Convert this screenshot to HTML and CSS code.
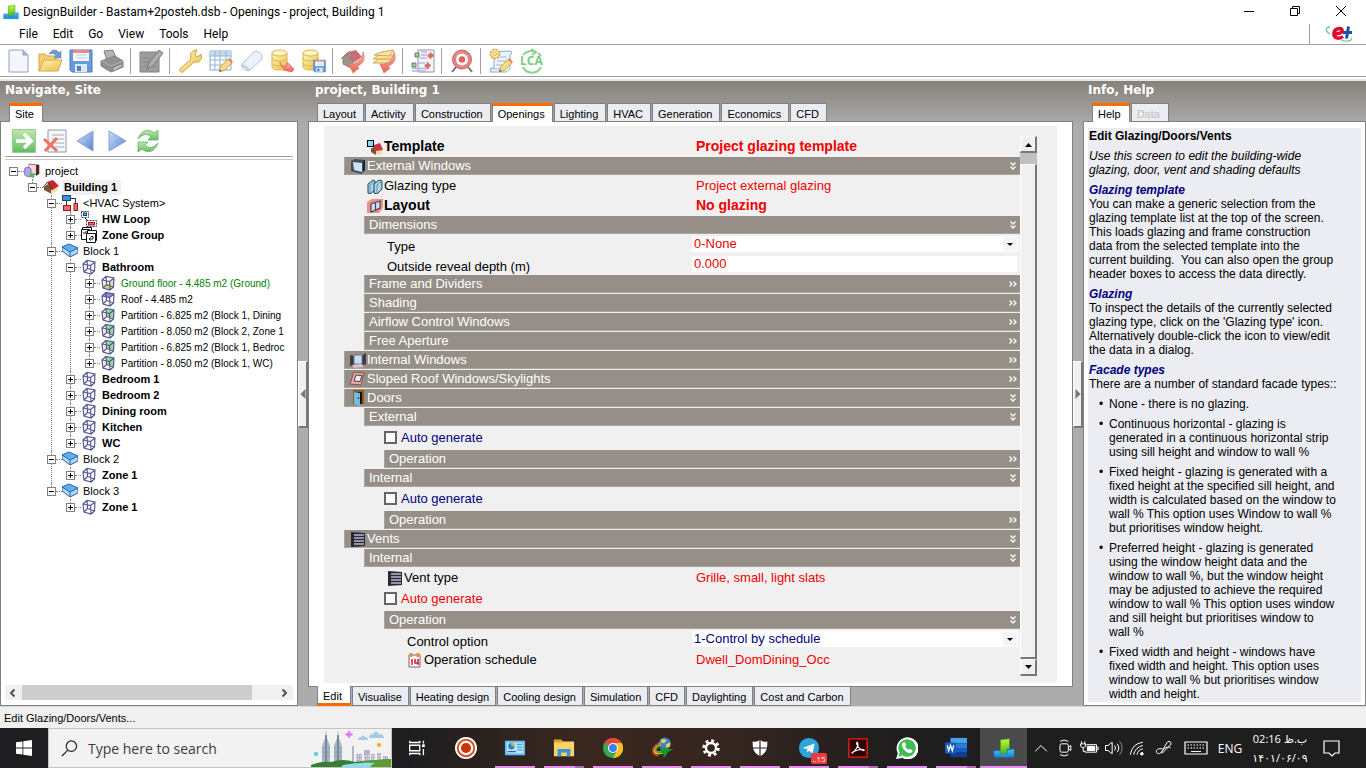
FILE: index.html
```html
<!DOCTYPE html>
<html lang="en">
<head>
<meta charset="utf-8">
<title>DesignBuilder - Bastam+2posteh.dsb - Openings - project, Building 1</title>
<link rel="stylesheet" href="styles.css">
</head>
<body>
<svg class="defs" aria-hidden="true">
  <defs>
    <linearGradient id="gy" x1="0" y1="0" x2="1" y2="1"><stop offset="0" stop-color="#fff3a8"/><stop offset="1" stop-color="#e9b93c"/></linearGradient>
    <linearGradient id="gb" x1="0" y1="0" x2="1" y2="1"><stop offset="0" stop-color="#c9dcf7"/><stop offset="1" stop-color="#4b74cf"/></linearGradient>
    <linearGradient id="gr" x1="0" y1="0" x2="0" y2="1"><stop offset="0" stop-color="#f9b0a0"/><stop offset="1" stop-color="#e9503c"/></linearGradient>
    <linearGradient id="gg" x1="0" y1="0" x2="0" y2="1"><stop offset="0" stop-color="#b9e8a8"/><stop offset="1" stop-color="#52b552"/></linearGradient>
    <linearGradient id="gl" x1="0" y1="0" x2="0" y2="1"><stop offset="0" stop-color="#b8ff3c"/><stop offset="1" stop-color="#52b51c"/></linearGradient>
    <linearGradient id="gs" x1="0" y1="0" x2="0" y2="1"><stop offset="0" stop-color="#4cc4fa"/><stop offset="1" stop-color="#1287e0"/></linearGradient>
  </defs>
  <symbol id="app" viewBox="0 0 24 24"><path d="M1 15h7v-2h3v5h4v-4l8-1v9H1z" fill="url(#gs)" stroke="#1573b8" stroke-width=".7"/><path d="M8 3l10-1v11h-3v4l-1 1H8z" fill="url(#gl)" stroke="#3d8f16" stroke-width=".7"/></symbol>
  <symbol id="cube" viewBox="0 0 16 16"><path d="M2 5l4-3.500 8 1.500-.5 9L10 15l-7-2zM2 5l7.500 1.500L14 3M9.500 6.500L10 15M6 1.500L6.500 9.500 3 13M6.500 9.500L13.500 12" fill="none" stroke="#585890" stroke-width="1.200"/></symbol>
  <symbol id="cube-floor" viewBox="0 0 16 16"><path d="M6.500 9L13.500 11 10 15 3 12.500z" fill="#e0cf70"/><path d="M9.500 6.500L14 3l-.5 8-3.500 4z" fill="#dfe0b8"/><use href="#cube"/></symbol>
  <symbol id="cube-roof" viewBox="0 0 16 16"><path d="M2 5l4-3.500L14 3 9.500 6.500z" fill="#8f8fe0"/><use href="#cube"/></symbol>
  <symbol id="cube-wall" viewBox="0 0 16 16"><path d="M6 2l8 1-.5 8-7-1.500z" fill="#8fdc94"/><use href="#cube"/></symbol>
  <symbol id="block" viewBox="0 0 16 16"><path d="M0 4l7-3 9 4v5l-8 4-8-6z" fill="#a9d9ff"/><path d="M0 4l7-3 9 4-8 4z" fill="#5aaefa"/><path d="M0 4l7-3 9 4v5l-8 4-8-6zM0 4l8 5 8-4M8 9v5" fill="none" stroke="#35628f"/></symbol>
  <symbol id="house" viewBox="0 0 16 16"><path d="M1 8l4-3 4 5v5l-8-4z" fill="#7b5238"/><path d="M8 10l6-3v5l-6 3z" fill="#f3dc9c"/><path d="M4 3l6-2 6 6-7 4z" fill="#c9252d"/><path d="M0 8.500L4.500 3l5 8" fill="none" stroke="#54322c"/></symbol>
  <symbol id="project" viewBox="0 0 16 16"><path d="M5 1l10 1v9l-10 1z" fill="#edb8bc" stroke="#5e3038" stroke-width=".6"/><path d="M5 2l7 .5-.5 8H5z" fill="#ffd5d8"/><path d="M12 2l3 0v9l-3 2z" fill="#4b2932"/><path d="M1 5l4-1 2 2v8l-5-1-2-2z" fill="#a9a9ea" stroke="#555384" stroke-width=".7"/><path d="M5 11l6-1-1 5-4-1z" fill="#4ebc65"/></symbol>
  <symbol id="hvac" viewBox="0 0 16 16"><path d="M8 3.500h5.500v6M4.500 6v5" fill="none" stroke="#233" stroke-width="1"/><rect x=".5" y=".5" width="8" height="5" fill="#3993d3" stroke="#174b7a"/><rect x="1.500" y="10.500" width="7" height="5" fill="#f46769" stroke="#a21422"/><rect x="12" y="8.500" width="3.500" height="7" fill="#f46769" stroke="#a21422"/></symbol>
  <symbol id="loop" viewBox="0 0 16 16"><path d="M.5.500h7v6h-7zM5.500 9.500h10v6h-10z" fill="none" stroke="#346" stroke-dasharray="2 1"/><rect x="2.500" y="2" width="3" height="2.500" fill="#7ac" stroke="#148"/><rect x="7.500" y="11.500" width="6" height="2.500" fill="#f66" stroke="#b11"/><path d="M4 7l3 3" stroke="#222"/></symbol>
  <symbol id="zgroup" viewBox="0 0 16 16"><g fill="#fff" stroke="#111"><path d="M1.500.500h9v10h-9z"/><path d="M.5 2.500h8v10h-8z"/><path d="M6.500 3.500h9v10h-9z"/><path d="M5.500 6.500h9v9h-9z"/></g><path d="M8 12h4V9.500h-2M9.500 10.500L8 12l1.500 1.500M2 6h3V4" fill="none" stroke="#111"/></symbol>
  <symbol id="win" viewBox="0 0 16 16"><path d="M1 3l4-2 10 1v10l-4 4-10-3z" fill="#444d5a"/><path d="M3 4l9 1v9l-8-2z" fill="#c9e4f7"/><path d="M13 3l2-1v10l-2 2z" fill="#20252d"/></symbol>
  <symbol id="winint" viewBox="0 0 16 16"><path d="M0 3l4 1v9l-4 1zM11 4l5-3v11l-4 2z" fill="#3d3c44"/><path d="M4 3h8v9H4z" fill="#c7defb" stroke="#777" /><path d="M2 13l10-1 2 3-10 1z" fill="#d6c4c8"/></symbol>
  <symbol id="sky" viewBox="0 0 16 16"><path d="M4 1l10 1-3 12-11-1z" fill="#f2a6a3" stroke="#8e4c4c"/><path d="M6 4l6 .5-2 6-6-.5z" fill="#d9f2fb" stroke="#444"/></symbol>
  <symbol id="door" viewBox="0 0 16 16"><path d="M3 0h11v14H3z" fill="#955a22"/><path d="M5 2h7v12H5z" fill="#111"/><path d="M4 2l6 1v13l-6-2z" fill="#66c3e8"/><circle cx="8.500" cy="8" r=".9" fill="#c11"/></symbol>
  <symbol id="vent" viewBox="0 0 16 16"><path d="M1 1l14 1v13l-14 1z" fill="#292933"/><path d="M4 4h10M4 7h10M4 10h10M4 13h10" stroke="#b8b8d0" stroke-width="1.300"/></symbol>
  <symbol id="template" viewBox="0 0 16 16"><path d="M4 9h5v7l-5-3z" fill="#79533b"/><path d="M9 11l6-1v5l-6 1z" fill="#f0df98"/><path d="M7 6l6-2 3 7-7 1-3-3z" fill="#cd3442"/><rect x=".5" y="1.500" width="6" height="6" fill="#86e1f8" stroke="#000"/></symbol>
  <symbol id="glaze" viewBox="0 0 16 16"><path d="M1 6l5-4 2 1v9l-5 4-2-1z" fill="#a6d9ef" stroke="#243d4e"/><path d="M7 6l5-4 3 1v8l-5 5-3-1z" fill="#a6d9ef" stroke="#243d4e"/><path d="M3 7l5-4M3 7v8M10 7l5-4M10 7v8" stroke="#4f8098" stroke-width=".8"/></symbol>
  <symbol id="layouticon" viewBox="0 0 16 16"><path d="M0 4l5-3 11 0v9l-4 5H0z" fill="#eb917d"/><path d="M4 6l9-3v7l-9 4zM8.500 4.500v7.500" fill="#cde2fa" stroke="#4a4460" stroke-width="1.200"/></symbol>
  <symbol id="cal" viewBox="0 0 16 16"><path d="M2 3h11v12H2z" fill="#fff" stroke="#835967"/><path d="M4 1v4M11 1v4" stroke="#d49b45" stroke-width="3"/><path d="M5 7v6M8 7v4h4M11 7v6" fill="none" stroke="#d31838" stroke-width="1.500"/></symbol>
  <symbol id="down" viewBox="0 0 10 10"><path d="M2.500 1.500L5 4l2.500-2.500M2.500 5.500L5 8l2.500-2.500" fill="none" stroke="#fff" stroke-width="1.300"/></symbol>
  <symbol id="side" viewBox="0 0 10 10"><path d="M1.500 2.500L4 5 1.500 7.500M5.500 2.500L8 5 5.500 7.500" fill="none" stroke="#fff" stroke-width="1.300"/></symbol>
  <symbol id="db" viewBox="0 0 24 24"><path d="M1 4v14c0 4 15 4 15 0V4" fill="url(#gy)" stroke="#d8ae45"/><ellipse cx="8.500" cy="4" rx="7.500" ry="3" fill="#fff6ba" stroke="#d8ae45"/><path d="M1 9c0 4 15 4 15 0M1 14c0 4 15 4 15 0" fill="none" stroke="#d8ae45"/></symbol>
  <symbol id="disk" viewBox="0 0 24 24"><path d="M1 1h22v22H3l-2-2z" fill="#5792d7" stroke="#3d6fae"/><path d="M4 1h16v11H4z" fill="#f4faff"/><path d="M4 1h16v3H4z" fill="#ee7f70"/><path d="M7 6h11M7 9h11" stroke="#a9c7e5"/><path d="M6 15h12v8H6z" fill="#d7e5f5"/><path d="M8 17h4v5H8z" fill="#4176b3"/></symbol>
  <symbol id="swoop" viewBox="0 0 24 24"><path d="M22 3c3 7 0 12-6 14l2 2-6 5-4-9 4 0c6-1 9-5 10-12z" fill="url(#gr)" stroke="#df6251" stroke-width=".7"/></symbol>
  <symbol id="pencil" viewBox="0 0 12 12"><path d="M1 11l1-4 6-6 3 3-6 6z" fill="#f8d875" stroke="#b98b3f" stroke-width=".7"/><path d="M8 1l1-1 3 3-1 1z" fill="#e46a64"/><path d="M1 11l.5-2 1.500 1.500z" fill="#555"/></symbol>
</svg>

<div class="app">
  <header class="titlebar">
    <svg class="i20"><use href="#app"/></svg>
    <h1>DesignBuilder - Bastam+2posteh.dsb - Openings - project, Building 1</h1>
    <div class="winbtns">
      <button aria-label="Minimize"><svg viewBox="0 0 12 12"><path d="M1 6.500h10" stroke="#000"/></svg></button>
      <button aria-label="Restore"><svg viewBox="0 0 12 12"><path d="M1.500 3.500h7v7h-7zM3.500 3.500v-2h7v7h-2" fill="none" stroke="#000"/></svg></button>
      <button aria-label="Close"><svg viewBox="0 0 12 12"><path d="M1 1l10 10M11 1L1 11" stroke="#000"/></svg></button>
    </div>
  </header>
  <div class="menurow">
    <nav class="menu"><button>File</button><button>Edit</button><button>Go</button><button>View</button><button>Tools</button><button>Help</button></nav>
    <div class="brand"><svg viewBox="0 0 28 18" width="28" height="18"><path d="M5 10C0 7 0 3 5 3M16 16c6 2 12 1 10-2" fill="none" stroke="#6bc98c" stroke-width="1.300"/><path d="M18 8.500h9M23.500 2.500l-2 12" fill="none" stroke="#1853a8" stroke-width="3"/><path d="M8 9.500c6 1 10-1 9-4-1-2-7-1-8 3-1 6 5 7 9 4" fill="none" stroke="#e2082c" stroke-width="3.400"/></svg></div>
  </div>
  <div class="toolbar">
    <button aria-label="New"><svg viewBox="0 0 24 24"><path d="M2 1h14l5 5v17H2z" fill="#f4f5fd" stroke="#8d94b5"/><path d="M16 1v5h5" fill="#a7b0da" stroke="#8d94b5"/></svg></button>
    <button aria-label="Open"><svg viewBox="0 0 24 24"><path d="M1 5h6l2 2h9v6H6L1 22z" fill="#f2cb58" stroke="#cf9e34"/><path d="M1 22L6 11h18l-4 11z" fill="url(#gy)" stroke="#d3a137"/><path d="M11 5c3-5 8-5 10-1l2-2v7h-7l2-2c-1-3-4-3-7-2z" fill="#5f8fca" stroke="#4775ae" stroke-width=".6"/></svg></button>
    <button aria-label="Save"><svg><use href="#disk"/></svg></button>
    <button aria-label="Print"><svg viewBox="0 0 24 24"><path d="M4 2l9-1 3 8-9 3z" fill="#aaa" stroke="#777"/><path d="M1 12l14-5 8 5v6l-12 5-10-6z" fill="#858585" stroke="#747474"/><path d="M2 12l9 5 12-5" fill="none" stroke="#aaa"/><path d="M12 19l9-4 2 2-9 5z" fill="#bbb" stroke="#777"/></svg></button>
    <span class="sep"></span>
    <button aria-label="Edit"><svg viewBox="0 0 24 24"><path d="M1 3h19v20H1z" fill="#939393" stroke="#777"/><path d="M4 9h8M4 13h7M4 17h12" stroke="#777"/><path d="M8 20l2-6L20 1l4 3-10 13z" fill="#a5a5a5" stroke="#666"/></svg></button>
    <span class="sep"></span>
    <button aria-label="Settings"><svg viewBox="0 0 24 24"><path d="M2 20L13 10c-2-5 1-9 6-9l-2 5 2 2 4-3c2 6-2 9-7 8L5 23c-2 1-4-1-3-3z" fill="url(#gy)" stroke="#d39a2d"/></svg></button>
    <button aria-label="Data table"><svg viewBox="0 0 24 24"><path d="M1 2h21v19H1z" fill="#fafdff" stroke="#7c9fc5"/><path d="M1 2h21v5H1z" fill="#bfd5ee"/><path d="M1 7h21M1 11h21M1 16h21M6 2v19M11 2v19M17 2v19" stroke="#8aaed1"/><use href="#pencil" x="9" y="9" width="15" height="15"/></svg></button>
    <button aria-label="Clear"><svg viewBox="0 0 24 24"><path d="M2 15L14 3q4-2 8 3 1 3-1 5L10 21q-4 2-8-3-1-2 0-3z" fill="#eaf1fc" stroke="#a9bbda"/><path d="M1 17q4 1 8 5l1-1Q6 16 2 15z" fill="#b6c8e9"/></svg></button>
    <button aria-label="Load from library"><svg viewBox="0 0 24 24"><use href="#db"/><path d="M9 13c2 5 5 4 7 4v-4l7 7-2 3-9-2 2-1c-3-1-5-3-5-7z" fill="url(#gr)" stroke="#d35a4c" stroke-width=".7"/></svg></button>
    <button aria-label="Save to library"><svg viewBox="0 0 24 24"><use href="#db"/><use href="#disk" x="11" y="10" width="13" height="14"/></svg></button>
    <span class="sep"></span>
    <button aria-label="Load building"><svg viewBox="0 0 24 24"><path d="M2 9l4-4 6 7v8L2 15z" fill="#988779" stroke="#776"/><path d="M12 11l7-3v8l-7 4z" fill="#ddc6ac"/><path d="M6 3l9-2 6 7-8 5z" fill="#c45f68"/><path d="M0 10l6-6 7 9" fill="none" stroke="#866"/><use href="#swoop"/></svg></button>
    <button aria-label="Load layers"><svg viewBox="0 0 24 24"><g fill="#f9e391" stroke="#cf9d48"><path d="M1 14l6-4h14l-5 4z"/><path d="M1 10l6-4h15l-5 4z"/><path d="M2 6l7-3 13-2-5 6z"/></g><use href="#swoop"/></svg></button>
    <span class="sep"></span>
    <button aria-label="Mapping"><svg viewBox="0 0 24 24"><path d="M7 1h16v22H7z" fill="#f3f3fa" stroke="#858aa5"/><path d="M10 3h6M10 6h6M9 9h7M7 14h7M1 19.500h17M1 22h14" stroke="#b3aed6" stroke-width="1.500"/><path d="M4 4h4v4H4zM1 14h4v4H1z" fill="#8fcb8d" stroke="#56725b"/><path d="M17 5.500h2V3l4 3.500-4 3.500V8h-2zM14 15.500h2V13l4 3.500-4 3.500V18h-2z" fill="#e15b55" stroke="#b94848" stroke-width=".5"/></svg></button>
    <span class="sep"></span>
    <button aria-label="Target"><svg viewBox="0 0 24 24"><path d="M6 18l-4 5M18 18l4 5" stroke="#666" stroke-width="2"/><circle cx="12" cy="10.500" r="9.500" fill="#e57672" stroke="#c75553"/><circle cx="12" cy="10.500" r="6" fill="#fff"/><circle cx="12" cy="10.500" r="3.200" fill="#df514e"/></svg></button>
    <span class="sep"></span>
    <button aria-label="Script"><svg viewBox="0 0 24 24"><path d="M5 3l17-1q2 2-1 4v14l-4 3H1l1-4h3z" fill="#edf4fd" stroke="#7fa7cf"/><path d="M9 8h9M8 12h9M7 16h8M2 20h14" stroke="#8db1dc"/><circle cx="6" cy="5" r="4.500" fill="#fae890" stroke="#d4a546" stroke-width="2" stroke-dasharray="2 1"/><circle cx="6" cy="5" r="1.500" fill="#fff" stroke="#d4a546"/><use href="#pencil" x="9" y="9" width="15" height="15"/></svg></button>
    <button class="lca" aria-label="LCA"><svg viewBox="0 0 24 24"><path d="M3 6A10 10 0 0 1 15 3M18 4l3 3M3 18a10 10 0 0 0 18 0M11 0l5 3-4 3" fill="none" stroke="#7fd082" stroke-width="2"/><text x="0" y="16">LCA</text></svg></button>
  </div>

  <main class="work">
    <section class="pane left">
      <h2>Navigate, Site</h2>
      <div class="tabs" role="tablist"><button class="tab on" role="tab">Site</button></div>
      <div class="sheet navsheet">
        <div class="navtools">
          <button aria-label="Go"><svg viewBox="0 0 24 24"><path d="M.5.500h23v23H.5z" fill="url(#gg)" stroke="#8dca86"/><path d="M4 12h14M12 5l7 7-7 7" fill="none" stroke="#fff" stroke-width="3.600"/></svg></button>
          <button aria-label="Delete"><svg viewBox="0 0 24 24"><path d="M5 1h18v22H5z" fill="#f7f7fa" stroke="#888c9a"/><path d="M9 6h12M9 10h12M12 14h9M12 18h9" stroke="#9fa2b2"/><path d="M1 10l13 12M14 9L2 22" stroke="#ee6156" stroke-width="3"/></svg></button>
          <button aria-label="Back"><svg viewBox="0 0 24 24"><path d="M3 12L19 2v20z" fill="url(#gb)" stroke="#7798d8"/></svg></button>
          <button aria-label="Forward"><svg viewBox="0 0 24 24"><path d="M21 12L4 2v20z" fill="url(#gb)" stroke="#7798d8"/></svg></button>
          <button aria-label="Refresh"><svg viewBox="0 0 24 24"><path d="M2 10C5 1 13-1 18 4l4-3v10H12l3-3C11 4 7 5 2 10z" fill="url(#gg)" stroke="#55ac55" stroke-width=".8"/><path d="M22 14c-3 9-11 11-16 6l-4 3V13h10l-3 3c4 4 8 3 13-2z" fill="url(#gg)" stroke="#55ac55" stroke-width=".8"/></svg></button>
        </div>
        <div class="treebox">
        <ul class="tree">
          <li><div class="node"><i class="x m"></i><svg><use href="#project"/></svg><span>project</span></div>
          <ul><li><div class="node b"><i class="x m"></i><svg><use href="#house"/></svg><span class="sel">Building 1</span></div>
            <ul>
              <li><div class="node"><i class="x m"></i><svg><use href="#hvac"/></svg><span>&lt;HVAC System&gt;</span></div>
                <ul>
                  <li><div class="node b"><i class="x"></i><svg><use href="#loop"/></svg><span>HW Loop</span></div></li>
                  <li><div class="node b"><i class="x"></i><svg><use href="#zgroup"/></svg><span>Zone Group</span></div></li>
                </ul></li>
              <li><div class="node"><i class="x m"></i><svg><use href="#block"/></svg><span>Block 1</span></div>
                <ul>
                  <li><div class="node b"><i class="x m"></i><svg><use href="#cube"/></svg><span>Bathroom</span></div>
                    <ul class="surfaces">
                      <li><div class="node g"><i class="x"></i><svg><use href="#cube-floor"/></svg><span>Ground floor - 4.485 m2 (Ground)</span></div></li>
                      <li><div class="node"><i class="x"></i><svg><use href="#cube-roof"/></svg><span>Roof - 4.485 m2</span></div></li>
                      <li><div class="node"><i class="x"></i><svg><use href="#cube-wall"/></svg><span>Partition - 6.825 m2 (Block 1, Dining</span></div></li>
                      <li><div class="node"><i class="x"></i><svg><use href="#cube-wall"/></svg><span>Partition - 8.050 m2 (Block 2, Zone 1</span></div></li>
                      <li><div class="node"><i class="x"></i><svg><use href="#cube-wall"/></svg><span>Partition - 6.825 m2 (Block 1, Bedroc</span></div></li>
                      <li><div class="node"><i class="x"></i><svg><use href="#cube-wall"/></svg><span>Partition - 8.050 m2 (Block 1, WC)</span></div></li>
                    </ul></li>
                  <li><div class="node b"><i class="x"></i><svg><use href="#cube"/></svg><span>Bedroom 1</span></div></li>
                  <li><div class="node b"><i class="x"></i><svg><use href="#cube"/></svg><span>Bedroom 2</span></div></li>
                  <li><div class="node b"><i class="x"></i><svg><use href="#cube"/></svg><span>Dining room</span></div></li>
                  <li><div class="node b"><i class="x"></i><svg><use href="#cube"/></svg><span>Kitchen</span></div></li>
                  <li><div class="node b"><i class="x"></i><svg><use href="#cube"/></svg><span>WC</span></div></li>
                </ul></li>
              <li><div class="node"><i class="x m"></i><svg><use href="#block"/></svg><span>Block 2</span></div>
                <ul><li><div class="node b"><i class="x"></i><svg><use href="#cube"/></svg><span>Zone 1</span></div></li></ul></li>
              <li><div class="node"><i class="x m"></i><svg><use href="#block"/></svg><span>Block 3</span></div>
                <ul><li><div class="node b"><i class="x"></i><svg><use href="#cube"/></svg><span>Zone 1</span></div></li></ul></li>
            </ul></li></ul></li>
        </ul>
        </div>
        <div class="hscroll"><button aria-label="Scroll left"><svg viewBox="0 0 16 14"><path d="M9.500 3.500L6 7l3.500 3.500" fill="none" stroke="#505050" stroke-width="2"/></svg></button><span class="hthumb"></span><button aria-label="Scroll right"><svg viewBox="0 0 16 14"><path d="M6.500 3.500L10 7l-3.500 3.500" fill="none" stroke="#505050" stroke-width="2"/></svg></button></div>
      </div>
    </section>

    <div class="split"><button aria-label="Collapse navigator"><svg viewBox="0 0 6 10"><path d="M5.500 0v10L.5 5z" fill="#777"/></svg></button></div>

    <section class="pane center">
      <h2>project, Building 1</h2>
      <div class="tabs" role="tablist"><button class="tab" role="tab">Layout</button><button class="tab" role="tab">Activity</button><button class="tab" role="tab">Construction</button><button class="tab on" role="tab">Openings</button><button class="tab" role="tab">Lighting</button><button class="tab" role="tab">HVAC</button><button class="tab" role="tab">Generation</button><button class="tab" role="tab">Economics</button><button class="tab" role="tab">CFD</button></div>
      <div class="sheet propsheet">
        <div class="props">
          <div class="list">
            <div class="row b in1"><span class="lab"><svg><use href="#template"/></svg>Template</span><span class="val">Project glazing template</span></div>
            <button class="bar"><svg class="ic"><use href="#win"/></svg><span>External Windows</span><svg class="ch"><use href="#down"/></svg></button>
            <div class="row in1"><span class="lab"><svg><use href="#glaze"/></svg>Glazing type</span><span class="val">Project external glazing</span></div>
            <div class="row b in1"><span class="lab"><svg><use href="#layouticon"/></svg>Layout</span><span class="val">No glazing</span></div>
            <button class="bar l1"><span>Dimensions</span><svg class="ch"><use href="#down"/></svg></button>
            <div class="row in2"><label class="lab low" for="type">Type</label><span class="field"><select id="type" class="red"><option>0-None</option></select><svg class="arr" viewBox="0 0 14 14"><path d="M4 6h6L7 9z"/></svg></span></div>
            <div class="row in2"><label class="lab low" for="depth">Outside reveal depth (m)</label><span class="field"><input id="depth" class="red" type="text" value="0.000"></span></div>
            <button class="bar l1"><span>Frame and Dividers</span><svg class="ch"><use href="#side"/></svg></button>
            <button class="bar l1"><span>Shading</span><svg class="ch"><use href="#side"/></svg></button>
            <button class="bar l1"><span>Airflow Control Windows</span><svg class="ch"><use href="#side"/></svg></button>
            <button class="bar l1"><span>Free Aperture</span><svg class="ch"><use href="#side"/></svg></button>
            <button class="bar"><svg class="ic"><use href="#winint"/></svg><span>Internal Windows</span><svg class="ch"><use href="#side"/></svg></button>
            <button class="bar"><svg class="ic"><use href="#sky"/></svg><span>Sloped Roof Windows/Skylights</span><svg class="ch"><use href="#side"/></svg></button>
            <button class="bar"><svg class="ic"><use href="#door"/></svg><span>Doors</span><svg class="ch"><use href="#down"/></svg></button>
            <button class="bar l1"><span>External</span><svg class="ch"><use href="#down"/></svg></button>
            <label class="check navy"><input type="checkbox">Auto generate</label>
            <button class="bar l2"><span>Operation</span><svg class="ch"><use href="#side"/></svg></button>
            <button class="bar l1"><span>Internal</span><svg class="ch"><use href="#down"/></svg></button>
            <label class="check navy"><input type="checkbox">Auto generate</label>
            <button class="bar l2"><span>Operation</span><svg class="ch"><use href="#side"/></svg></button>
            <button class="bar"><svg class="ic"><use href="#vent"/></svg><span>Vents</span><svg class="ch"><use href="#down"/></svg></button>
            <button class="bar l1"><span>Internal</span><svg class="ch"><use href="#down"/></svg></button>
            <div class="row in2"><span class="lab"><svg><use href="#vent"/></svg>Vent type</span><span class="val">Grille, small, light slats</span></div>
            <label class="check red"><input type="checkbox">Auto generate</label>
            <button class="bar l2"><span>Operation</span><svg class="ch"><use href="#down"/></svg></button>
            <div class="row in3"><label class="lab low" for="ctrl">Control option</label><span class="field"><select id="ctrl" class="navy"><option>1-Control by schedule</option></select><svg class="arr" viewBox="0 0 14 14"><path d="M4 6h6L7 9z"/></svg></span></div>
            <div class="row in3"><span class="lab"><svg><use href="#cal"/></svg>Operation schedule</span><span class="val">Dwell_DomDining_Occ</span></div>
          </div>
          <div class="vscroll"><button aria-label="Scroll up"><svg viewBox="0 0 9 5"><path d="M1 5l3.500-4L8 5z"/></svg></button><span class="vthumb"></span><button aria-label="Scroll down"><svg viewBox="0 0 9 5"><path d="M1 0l3.500 4L8 0z"/></svg></button></div>
        </div>
      </div>
      <div class="tabs bottom" role="tablist"><button class="tab on" role="tab">Edit</button><button class="tab" role="tab">Visualise</button><button class="tab" role="tab">Heating design</button><button class="tab" role="tab">Cooling design</button><button class="tab" role="tab">Simulation</button><button class="tab" role="tab">CFD</button><button class="tab" role="tab">Daylighting</button><button class="tab" role="tab">Cost and Carbon</button></div>
    </section>

    <div class="split"><button aria-label="Collapse help"><svg viewBox="0 0 6 10"><path d="M.5 0v10l5-5z" fill="#777"/></svg></button></div>

    <section class="pane right">
      <h2>Info, Help</h2>
      <div class="tabs" role="tablist"><button class="tab on" role="tab">Help</button><button class="tab off" role="tab">Data</button></div>
      <div class="sheet helpsheet">
        <article class="help">
          <h3>Edit Glazing/Doors/Vents</h3>
          <p><em>Use this screen to edit the building-wide glazing, door, vent and shading defaults</em></p>
          <h4>Glazing template</h4>
          <p>You can make a generic selection from the glazing template list at the top of the screen. This loads glazing and frame construction<br>data from the selected template into the current building.&nbsp; You can also open the group header boxes to access the data directly.</p>
          <h4>Glazing</h4>
          <p>To inspect the details of the currently selected glazing type, click on the 'Glazing type' icon. Alternatively double-click the icon to view/edit the data in a dialog.</p>
          <h4>Facade types</h4>
          <p>There are a number of standard facade types::</p>
          <ul>
            <li>None - there is no glazing.</li>
            <li>Continuous horizontal - glazing is generated in a continuous horizontal strip using sill height and window to wall %</li>
            <li>Fixed height - glazing is generated with a fixed height at the specified sill height, and width is calculated based on the window to wall % This option uses Window to wall % but prioritises window height.</li>
            <li>Preferred height - glazing is generated using the window height data and the window to wall %, but the window height may be adjusted to achieve the required window to wall % This option uses window and sill height but prioritises window to wall&nbsp;%</li>
            <li>Fixed width and height - windows have fixed width and height. This option uses window to wall % but prioritises window width and height.</li>
          </ul>
        </article>
      </div>
    </section>
  </main>
  <footer class="status">Edit Glazing/Doors/Vents...</footer>

  <div class="taskbar">
    <button class="start" aria-label="Start"><svg viewBox="0 0 16 16"><path d="M0 2.300l6.500-.9v6.100H0zM7.300 1.300L16 0v7.500H7.300zM0 8.400h6.500v6.200L0 13.700zM7.300 8.400H16V16l-8.700-1.200z" fill="#fff"/></svg></button>
    <label class="search">
      <svg class="mag" viewBox="0 0 18 18"><circle cx="11" cy="6.500" r="5.500" fill="none" stroke="#222" stroke-width="1.300"/><path d="M7 11l-6 6" stroke="#222" stroke-width="1.300"/></svg>
      <input type="text" placeholder="Type here to search" aria-label="Type here to search">
      <svg class="city" viewBox="0 0 80 38"><path d="M11 36V17l3-8 1-8 1 8 3 8v19zM23 36V17l3-8 1-8 1 8 3 8v19z" fill="#a9b6c6"/><path d="M15 6v30M27 6v30" stroke="#66798e" stroke-width="1.500"/><path d="M11 19h8M11 23h8M11 27h8M23 19h8M23 23h8M23 27h8" stroke="#7e90a6" stroke-width=".8"/><path d="M38 1l1.500 3 3 1.500-3 1.500L38 9.500 36.500 7l-3-1.500 3-1.500z" fill="#dc7bf0"/><circle cx="5" cy="25" r="2.200" fill="#5fd0e8"/><circle cx="68" cy="16" r="2" fill="#f5a81c"/><path d="M47 11q0-3 3-3 2-3 4 0 3 0 3 3zM58 9q0-4 4-4 3-5 6 0 5 0 5 4z" fill="#a8c9df"/><path d="M41 33V17h2v16zM45 33v-8h6v8zM53 33V21h6v12zM60 33v-8h4v8zM66 33v-9h4v9zM72 33v-6h5v6z" fill="#b9b2c4"/><path d="M45 27h34M45 30h34" stroke="#fff" stroke-dasharray="1 1"/><path d="M0 36q10-4 20-3 12-4 24 0 18-2 36-3v8H0z" fill="#397d32"/><path d="M50 32l30-2v8H60z" fill="#5c9a34"/><path d="M32 36q16-3 32-2-6 3-4 4H30z" fill="#87e0f0"/></svg>
    </label>
    <div class="apps">
      <button class="plain" aria-label="Task view"><svg viewBox="0 0 24 24"><path d="M4 4v2h11V4M4 20v-2h11v2M4 9h11v6H4zM19 4v3M19 13v7" fill="none" stroke="#fff" stroke-width="1.400"/><path d="M17.500 8h3v3h-3z" fill="#fff"/></svg></button>
      <button class="plain" aria-label="Recorder"><svg viewBox="0 0 24 24"><circle cx="12" cy="12" r="12" fill="#fff"/><circle cx="12" cy="12" r="9" fill="#fff" stroke="#d4551f" stroke-width="2.200"/><circle cx="12" cy="12" r="5.500" fill="#c93405"/></svg></button>
      <button aria-label="Control panel"><svg viewBox="0 0 24 24"><path d="M1 4h22v16H1z" fill="#5eb9ee"/><path d="M3 6h18v12H3z" fill="#b9e6fb"/><circle cx="8" cy="10" r="3.500" fill="#1f86cf"/><path d="M8 10V6.500a3.500 3.500 0 0 1 3.500 3.500z" fill="#f4a431"/><path d="M14 8h6M14 11h6M14 14h6" stroke="#1f86cf"/><path d="M4 16h9" stroke="#237"/></svg></button>
      <button class="many" aria-label="File explorer"><svg viewBox="0 0 24 24"><path d="M1 3h8l2 2h12v16H1z" fill="#fbd366"/><path d="M1 3h8l2 3H1z" fill="#e3a31c"/><path d="M5 21v-8h14v8h-4v-4H9v4z" fill="#3f93da"/></svg></button>
      <button aria-label="Chrome"><svg viewBox="0 0 24 24"><circle cx="12" cy="12" r="11" fill="#35a853"/><path d="M12 12L2.500 6.500A11 11 0 0 1 21.500 6.500z" fill="#e8453c"/><path d="M12 6.500h9.500A11 11 0 0 1 12 23l5-9z" fill="#fbc116"/><circle cx="12" cy="12" r="5.500" fill="#fff"/><circle cx="12" cy="12" r="4.300" fill="#3d7ff0"/></svg></button>
      <button aria-label="Download manager"><svg viewBox="0 0 24 24"><circle cx="15" cy="7" r="6.500" fill="#467bc9"/><path d="M11 3q4-2 6 1l-3 3-3-1zM16 8l5-2v4l-4 2z" fill="#d5d65b"/><path d="M10 6C-2 11-1 23 13 18l-2-3C4 18 4 12 11 9z" fill="#f0bd22"/><path d="M9 7C0 11 0 20 8 20" fill="none" stroke="#d03d28" stroke-width="2"/><path d="M10 9C3 12 4 17 9 17" fill="none" stroke="#3bb54a" stroke-width="1.500"/><path d="M9 12l15 1-5 3-5 7-1-6-5 1 3-3z" fill="#149b27"/></svg></button>
      <button aria-label="Settings"><svg viewBox="0 0 24 24"><circle cx="12" cy="12" r="8" fill="none" stroke="#fff" stroke-width="3" stroke-dasharray="3.140 3.140"/><circle cx="12" cy="12" r="5.500" fill="none" stroke="#fff" stroke-width="2.600"/></svg></button>
      <button aria-label="Security"><svg viewBox="0 0 24 24"><path d="M12 3q3 3 8 2c0 9-1 12-8 16C5 17 4 14 4 5q5 1 8-2z" fill="#fff"/><path d="M12 3v18M4 12h16" stroke="#302522" stroke-width="1.300"/></svg></button>
      <button aria-label="Telegram"><svg viewBox="0 0 24 24"><circle cx="12" cy="12" r="11" fill="#2da5dc"/><path d="M5 12l13-5-2 11-4-3-2 2v-4l5-4-6 4z" fill="#fff"/></svg><span class="badge">..15</span></button>
      <button class="many" aria-label="Acrobat"><svg viewBox="0 0 24 24"><path d="M2 2h20v20H2z" fill="#2c0503" stroke="#f21b0c" stroke-width="1.500"/><path d="M5.500 17c3-1 8-8 6-11-2-1-1 4 3 7s5 2 4 1c-2-1-8 0-11 2-2 2-2 2-2 1z" fill="none" stroke="#fff" stroke-width="1.200"/></svg></button>
      <button aria-label="WhatsApp"><svg viewBox="0 0 24 24"><path d="M0 24l2-6A12 12 0 1 1 7 23z" fill="#fff"/><path d="M2.500 21.500l1.500-4.500a9.500 9.500 0 1 1 3 3z" fill="#3ebe52"/><path d="M8 6c-5 3 4 14 9 11 2-2 1-3-2-4l-1 1c-2-1-4-3-4-4l1-1c-1-3-1-4-3-3z" fill="#fff"/></svg></button>
      <button class="many" aria-label="Word"><svg viewBox="0 0 24 24"><path d="M6 1h18v6H6z" fill="#41a5ee"/><path d="M6 7h18v5H6z" fill="#2b7cd3"/><path d="M6 12h18v5H6z" fill="#185abd"/><path d="M6 17h18v5H6z" fill="#103f91"/><path d="M0 6h12v12H0z" fill="#185abd"/><path d="M2.500 9l1.500 6 2-6 2 6 1.500-6" fill="none" stroke="#fff" stroke-width="1.400"/></svg></button>
      <button class="active" aria-label="DesignBuilder"><svg><use href="#app"/></svg></button>
    </div>
    <div class="tray">
      <button aria-label="Show hidden icons"><svg viewBox="0 0 24 24"><path d="M5 16l7-7 7 7"/></svg></button>
      <button aria-label="Camera"><svg viewBox="0 0 24 24"><rect x="6" y="7" width="10" height="10" rx="2"/><path d="M16 11l3-2v6l-3-2M6 4q5-3 10 0M6 20q5 3 10 0"/></svg></button>
      <button aria-label="Battery"><svg viewBox="0 0 24 24"><path d="M9 8h12v9H7M21 11h2v3h-2M2 7h6v3l-3 2-3-2zM3 7V4M7 7V4M5 12v4h3"/><path d="M10 10h9v5h-9z" fill="#fff"/></svg></button>
      <button aria-label="Volume"><svg viewBox="0 0 24 24"><path d="M3 9h3l5-4v14l-5-4H3zM14 9q2 3 0 6M17 7q4 5 0 10"/><path d="M20 4q6 8 0 16" stroke="#888"/></svg></button>
      <button aria-label="Wi-Fi"><svg viewBox="0 0 24 24"><path d="M4 20Q6 7 19 5M8 20q2-9 11-11M12 20q1-6 7-7M16 20q1-3 3-3"/><circle cx="18" cy="19" r="1.500" fill="#fff"/></svg></button>
      <button class="wide" aria-label="Pen"><svg viewBox="0 0 24 24"><path d="M10 13c-4-1-8 1-7 4s6 2 7-2l6-10q2-2 4 0t-2 5l-8 8c-2 0-1-2 1-4 3-3 7-4 9-2"/></svg></button>
      <button class="key" aria-label="Touch keyboard"><svg viewBox="0 0 24 14"><path d="M1 1h22v12H1zM7 10.500h10"/><path d="M3.500 4h18M3.500 7h18" stroke-dasharray="1.500 1.500"/></svg></button>
      <button class="lang">ENG</button>
      <div class="clock"><span>02:16 ب.ظ</span><span>۱۴۰۱/۰۶/۰۹</span></div>
      <button class="note" aria-label="Notifications"><svg viewBox="0 0 24 24"><path d="M4 5h15v12h-4l-3 3-3-3H4z"/></svg></button>
    </div>
  </div>
</div>
</body>
</html>
```
FILE: styles.css
```css
* { box-sizing: border-box; }
body { margin: 0; font-family: "Liberation Sans", Arial, sans-serif; font-size: 11px; color: #000; background: #fff; }
button { margin: 0; padding: 0; border: 0; background: none; font: inherit; color: inherit; }
h1, h2, h3, h4, p, ul { margin: 0; padding: 0; font-weight: normal; }
.defs { position: absolute; width: 0; height: 0; }
.app { display: flex; flex-direction: column; height: 100vh; overflow: hidden; }

/* Title, menu and toolbar */
.titlebar { display: flex; align-items: center; height: 24px; padding-left: 1px; }
.i20 { width: 20px; height: 16px; }
.titlebar h1 { flex: 1; padding-left: 2px; font: 12px Roboto, sans-serif; }
.winbtns { display: flex; margin-right: 2px; }
.winbtns button { width: 46px; height: 20px; }
.winbtns svg { width: 12px; height: 12px; }
.menurow { display: flex; height: 21px; border-bottom: 1px solid #a0a0a0; font: 12px Roboto, sans-serif; }
.menu { display: flex; flex: 1; gap: 15px; padding-left: 19px; }
.brand { width: 57px; padding-left: 15px; border-left: 1px solid #a0a0a0; }
.toolbar { display: flex; align-items: center; height: 32px; padding-left: 3px; border-bottom: 1px solid #a0a0a0; }
.toolbar button, .navtools button { display: flex; justify-content: center; width: 31px; }
.toolbar svg, .navtools svg { width: 24px; height: 24px; opacity: .9; overflow: visible; }
.sep { width: 1px; height: 26px; margin: 0 4px 0 3px; background: #a0a0a0; }
.lca text { font: bold 12px "Open Sans", sans-serif; fill: #6bc870; }

/* Work area */
.work { display: grid; grid-template-columns: 298px 10px minmax(0, 1fr) 10px 283px; flex: 1; min-height: 0; margin-top: 2px; background: linear-gradient(#87817a, #acacac 44px) padding-box; border-top: 2px solid #e8e8e8; border-bottom: 1px solid #d8d8d8; }
.pane { display: flex; flex-direction: column; min-width: 0; min-height: 0; }
.pane h2 { height: 22px; padding-left: 5px; font: bold 12px/19px "DejaVu Sans", Verdana, sans-serif; color: #fff; }
.center h2 { padding-left: 7px; }
.tabs { display: flex; align-items: stretch; gap: 1px; height: 19px; padding-left: 9px; margin-bottom: -1px; }
.tab { padding: 2px 7px 0 5px; border: 1px solid #808080; background: #ecedf2; white-space: nowrap; }
.tab.on { position: relative; background: #fff; border-top: 3px solid #ff6a00; border-bottom: 0; padding-top: 0; }
.left .tab, .right .tab { padding-right: 8px; }
.tab.off { color: #c0c0c0; }
.sheet { display: flex; flex-direction: column; flex: 1; min-height: 0; background: #fff; border: 1px solid #808080; }
.tabs.bottom { height: 20px; margin: -1px 0 0; }
.bottom .tab { padding: 1px 6px 0 5px; }
.bottom .tab.on { border-top: 0; border-bottom: 3px solid #ff6a00; padding: 3px 8px 0 5px; }
.split button { display: flex; align-items: center; justify-content: center; width: 10px; height: 67px; margin-top: 280px; background: #f0f0f0; border: 1px solid #fff; border-right: 2px solid #777; border-bottom: 2px solid #777; }
.split svg { width: 6px; height: 10px; }

/* Navigator */
.navsheet { padding: 7px 4px 5px; }
.navtools { display: flex; height: 28px; padding-left: 3px; border-bottom: 1px solid #a0a0a0; }
.treebox { flex: 1; min-height: 0; margin-top: 2px; padding-top: 3px; border-top: 1px solid #c8c8c8; overflow: hidden; }
.tree, .tree ul { list-style: none; }
.tree { padding-left: 4px; }
.tree ul { padding-left: 19px; }
.tree li { position: relative; }
.tree li li::before { content: ""; position: absolute; left: 4px; top: 0; bottom: 0; border-left: 1px dotted #808080; }
.tree li li:last-child::before { bottom: auto; height: 8px; }
.node { position: relative; display: flex; align-items: center; height: 16px; white-space: nowrap; }
.node > * { flex-shrink: 0; }
.node::before { content: ""; order: 1; flex-shrink: 0; width: 6px; border-top: 1px dotted #808080; }
.x { position: relative; width: 9px; height: 9px; border: 1px solid #808080; background: linear-gradient(#000, #000) center / 5px 1px no-repeat, linear-gradient(#000, #000) center / 1px 5px no-repeat, #fff; }
.x.m { background: linear-gradient(#000, #000) center / 5px 1px no-repeat, #fff; }
.node svg { order: 2; width: 16px; height: 16px; }
.node span { order: 3; margin-left: 3px; padding-left: 2px; line-height: 15px; }
.node .sel { padding-right: 4px; background: #f0f0f0; }
.surfaces { font-size: 10px; }
.b { font-weight: bold; }
.g { color: #008000; }
.hscroll { display: flex; height: 15px; background: #f0f0f0; }
.hscroll button { width: 17px; }
.hscroll button:last-child { margin-left: auto; }
.hscroll svg { display: block; width: 16px; height: 14px; }
.hthumb { width: 80%; background: #cdcdcd; }

/* Property list */
.propsheet { padding: 4px 15px 3px; }
.props { display: flex; flex: 1; min-height: 0; padding: 10px 20px 7px; background: #f0f0f0; font-size: 13px; }
.list { flex: 1; min-width: 0; }
.bar { display: flex; align-items: center; width: 100%; height: 18px; margin-bottom: 1px; padding: 0 2px 0 4px; border-left: 1px solid #a8a4a0; border-bottom: 1px solid #a8a4a0; background: #968f88; color: #fff; text-align: left; }
.bar span { flex: 1; }
.bar.l1 { width: calc(100% - 20px); margin-left: 20px; }
.bar.l2 { width: calc(100% - 40px); margin-left: 40px; }
.ic { width: 16px; height: 16px; margin: 0 1px; }
.ch { width: 10px; height: 10px; }
.row { display: grid; grid-template-columns: minmax(0, 348fr) minmax(0, 328fr); height: 20px; line-height: 19px; }
.lab { display: flex; align-items: center; height: 19px; padding-left: 23px; }
.in2 .lab { padding-left: 43px; }
.in3 .lab { padding-left: 63px; }
.lab svg { width: 16px; height: 16px; margin-right: 1px; }
.lab.low { height: 20px; padding-top: 2px; }
.val { padding-left: 4px; color: #f00000; }
.row.b { font-size: 14px; }
.red { color: #f00000; }
.navy { color: #000080; }
.field { position: relative; padding: 1px 2px 0 0; line-height: 16px; }
.field select, .field input { display: block; width: 100%; height: 16px; padding: 0 2px; border: 0; border-radius: 0; background: #fff; font: inherit; appearance: none; outline: 0; }
.arr { position: absolute; right: 3px; top: 2px; width: 14px; height: 14px; background: #f4f4f4; pointer-events: none; }
.check { display: flex; align-items: center; gap: 4px; height: 23px; padding: 0 0 2px 40px; }
.check input { width: 13px; height: 13px; margin: 0; border: 2px solid #666; background: #fff; appearance: none; }
.vscroll { display: flex; flex-direction: column; width: 17px; background: #c0c0c0; }
.vscroll button { display: flex; align-items: center; justify-content: center; height: 17px; }
.vscroll svg { width: 9px; height: 5px; }
.vscroll button, .vthumb { background: #f0f0f0; border: 1px solid #fff; border-right: 2px solid #777; border-bottom: 2px solid #777; }
.vthumb { flex: 1; margin-top: 11px; }
.row:first-child { height: 21px; padding-top: 1px; }

/* Help */
.helpsheet { padding: 6px 4px 3px; }
.help { flex: 1; min-height: 0; padding: 1px 21px 0 1px; overflow: hidden; background: #ecedf2; font-size: 12px; line-height: 14px; }
.help h3 { margin-bottom: 6px; font-size: 12px; font-weight: bold; }
.help h4 { font-size: 12px; font-weight: bold; font-style: italic; color: #000080; }
.help p { margin-bottom: 6px; }
.help ul { list-style: none; padding-left: 20px; }
.help li { position: relative; margin-bottom: 6px; }
.help li::before { content: "•"; position: absolute; left: -10px; }
.status { height: 21px; padding: 4px 4px 0; background: #f0f0f0; line-height: 15px; }

/* Taskbar */
.taskbar { display: flex; height: 40px; background: linear-gradient(90deg, #1e1e20 30%, #39271f 42%, #36261f 52%, #1f1e1f 66%); color: #fff; font-family: "Open Sans", sans-serif; }
.start { width: 48px; }
.start svg { display: block; width: 16px; height: 16px; margin: auto; }
.search { display: flex; align-items: center; width: 344px; padding-left: 12px; background: #f2f2f2; border: 1px solid #c4c4c4; }
.mag { width: 17px; height: 17px; }
.search input { flex: 1; min-width: 0; padding: 0 0 0 10px; border: 0; background: none; font: 14px "Open Sans", sans-serif; outline: 0; }
.search input::placeholder { color: #3c3c3c; opacity: 1; }
.city { width: 80px; height: 38px; }
.apps { display: flex; }
.apps button { position: relative; display: flex; align-items: center; justify-content: center; width: 49px; }
.apps svg { width: 22px; height: 22px; }
.apps button::after { content: ""; position: absolute; left: 5px; right: 4px; bottom: 0; height: 2px; background: #e48ef0; }
.apps .many::after { background: linear-gradient(90deg, #e48ef0 31px, #a66cae 31px); }
.apps .plain::after { display: none; }
.apps .active { width: 47px; background: #4a4a4b; }
.apps .active::after { left: 0; right: 0; }
.badge { position: absolute; right: 6px; bottom: 4px; width: 16px; height: 11px; border-radius: 2px; background: #ef3b3b; font-size: 8px; line-height: 11px; }
.tray { display: flex; flex: 1; align-items: center; justify-content: flex-end; padding-right: 14px; }
.tray button { display: flex; justify-content: center; width: 24px; }
.tray svg { width: 20px; height: 20px; fill: none; stroke: #fff; stroke-width: 1.2; }
.tray .wide { width: 30px; }
.tray .key { width: 33px; }
.tray .key svg { width: 24px; height: 14px; }
.tray .lang { width: 36px; font-size: 12px; }
.clock { display: flex; flex-direction: column; width: 64px; text-align: center; font: 11px/19px "Open Sans", "DejaVu Sans", sans-serif; white-space: nowrap; }
.tray .note { width: 40px; }
.tray .note svg { width: 24px; height: 24px; }
```
